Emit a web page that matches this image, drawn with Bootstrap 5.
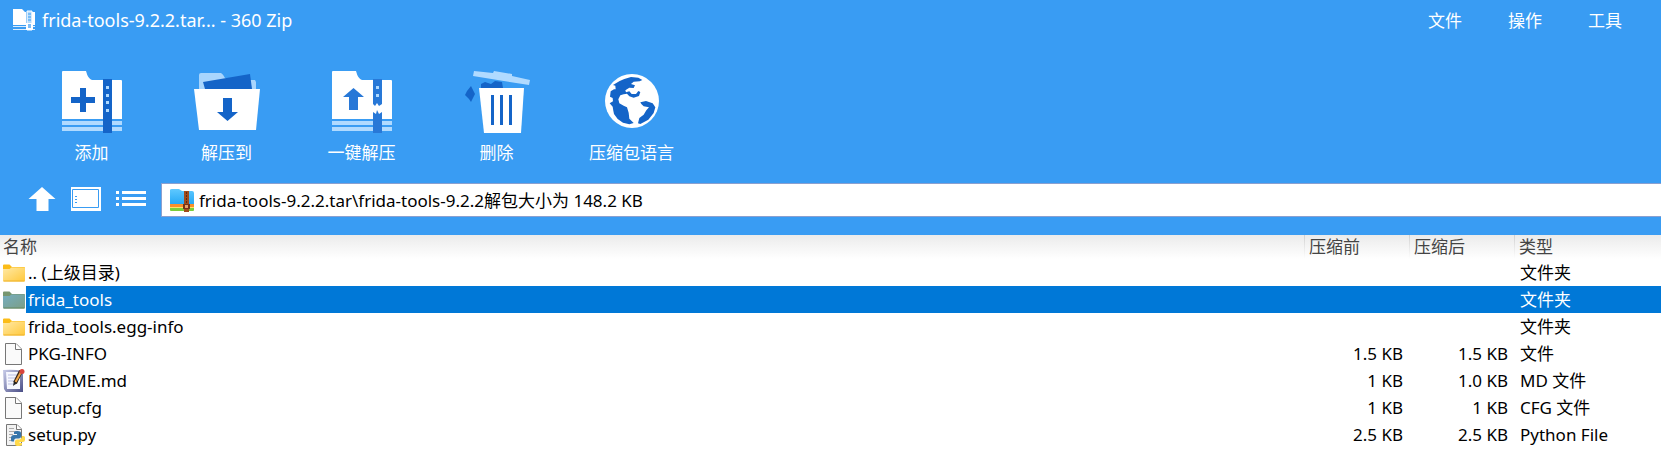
<!DOCTYPE html>
<html lang="zh-CN">
<head>
<meta charset="utf-8">
<meta name="viewport" content="width=device-width, initial-scale=1">
<title>frida-tools-9.2.2.tar... - 360 Zip</title>
<link href="https://cdn.jsdelivr.net/npm/bootstrap@5.3.0/dist/css/bootstrap.min.css" rel="stylesheet">
<style>
body{font-family:"Noto Sans","Noto Sans CJK SC",sans-serif;font-size:17px;line-height:27px;color:#000;background:#fff;overflow-x:hidden}
svg{display:block;flex:none}
button{font:inherit;color:inherit;background:none;border:0;padding:0}
.app-head{background:#399cf3;color:#fff;padding-bottom:18px}
.title-row{height:42px;padding:0 0 2px 12px}
.app-title{font-size:18px;padding-left:6px}
.menu-link{color:#fff;text-decoration:none;width:80px}
.menu-bar{margin-right:-7px}
.tool-row{padding:28px 0 0 24px}
.tool-btn{width:135px}
.tool-label{margin-top:5px;line-height:28px}
.path-row{margin-top:16px;padding-left:28px}
.path-row button{padding-bottom:2px}
.view-btns{gap:15px;margin-right:15px}
.path-box{height:34px;border:1px solid #8aa0d0;border-right:0;background:#fff;padding-left:7px}
.path-box input{border:0;outline:0;padding:0 0 2px;height:32px;color:#000;background:none;margin-left:4px}
.file-table{table-layout:fixed;line-height:27px}
.file-table td,.file-table th{padding:0;font-weight:400;white-space:nowrap;height:27px}
.file-table thead{background:linear-gradient(#ebebeb,#fff)}
.file-table thead th{height:24px;line-height:24px;color:#444;padding-left:5px}
.file-table thead th:first-child{padding-left:3px}
.file-table thead th+th{background:linear-gradient(#d0d0d0,#fff) left top/1px 100% no-repeat}
.size-col{width:105px}
.type-col{width:147px}
.file-table td.size-cell{text-align:right;padding-right:6px}
.file-table td.type-cell{padding-left:6px}
.icon-cell{width:26px;height:27px;padding-left:3px;background:#fff}
.file-name{padding-left:2px}
.picked{background:#0078d7;color:#fff}
</style>
</head>
<body>
<svg width="0" height="0" class="position-absolute" aria-hidden="true">
<defs>
<linearGradient id="gold" x1="0" y1="0" x2="1" y2="1"><stop offset="0" stop-color="#ffe9a6"/><stop offset="1" stop-color="#ffc83a"/></linearGradient>
<linearGradient id="dim" x1="0" y1="0" x2="1" y2="1"><stop offset="0" stop-color="#74adc0"/><stop offset="1" stop-color="#7c9f86"/></linearGradient>
<linearGradient id="sky" x1="0" y1="0" x2="0" y2="1"><stop offset="0" stop-color="#5fc9ff"/><stop offset="1" stop-color="#1fa4f4"/></linearGradient>
<linearGradient id="pad" x1="0" y1="0" x2="1" y2="1"><stop offset="0" stop-color="#c9cdea"/><stop offset="1" stop-color="#4a4e86"/></linearGradient>
<symbol id="folder" viewBox="0 0 22 18"><path d="M0 1.5Q0 .5 1 .5H6.500L9 3H21Q22 3 22 4V7H0z" fill="#fbbc18"/><path d="M0 5H6.500L8.500 3.500H21Q22 3.500 22 4.500V16.500Q22 17.500 21 17.500H1Q0 17.500 0 16.500z" fill="url(#gold)"/><path d="M.5 17H21.500" stroke="#eeb22a"/></symbol>
<symbol id="folder-dim" viewBox="0 0 22 18"><path d="M0 1.500Q0 .5 1 .5H6.500L9 3H21Q22 3 22 4V7H0z" fill="#76966f"/><path d="M0 5H6.500L8.500 3.500H21Q22 3.500 22 4.500V16.500Q22 17.500 21 17.500H1Q0 17.500 0 16.500z" fill="url(#dim)"/><path d="M.5 17H21.500" stroke="#66875d"/></symbol>
<symbol id="sheet" viewBox="0 0 22 22"><path d="M2.500 .5H13L18.500 6V21.500H2.500z" fill="#fafafa" stroke="#777"/><path d="M12.500 .5V6.500H18.500" fill="#fff" stroke="#777"/></symbol>
</defs>
</svg>

<header class="app-head">
  <div class="title-row d-flex align-items-center">
    <svg width="24" height="24" viewBox="0 0 24 24"><path d="M1 1H10L13 4H14V17H1z" fill="#fff"/><path d="M1 18.500H14M1 21.500H14M20 18.500H23M20 21.500H23" stroke="#d8edff"/><path d="M20 4H23V17H20z" fill="#fff"/><path d="M15 3H20V22H15z" fill="#b7dcfb" stroke="#fff"/><path d="M16 6H19M16 9H19M16 12H19" stroke="#399cf3"/><path d="M14 15H21V22H14z" fill="#fff"/><path d="M16 16H19V20H16z" fill="#7dbdf6"/></svg>
    <span class="app-title">frida-tools-9.2.2.tar... - 360 Zip</span>
    <nav class="menu-bar ms-auto d-flex" aria-label="菜单">
      <a class="menu-link" href="#">文件</a><a class="menu-link" href="#">操作</a><a class="menu-link" href="#">工具</a>
    </nav>
  </div>

  <div class="tool-row d-flex">
    <button type="button" class="tool-btn d-flex flex-column align-items-center">
      <svg width="68" height="64" viewBox="0 0 68 64"><path d="M4 2Q4 1 5 1H28Q30 9 34 10H63Q64 10 64 11V49H4z" fill="#fff"/><path d="M4 51H64V55H4zM4 57H64V61H4z" fill="#b0daff"/><path d="M45 9H54V63H45z" fill="#1464c8"/><path d="M48 16h3v3h-3zM48 24h3v3h-3zM48 31h3v3h-3zM48 39h3v3h-3z" fill="#b0daff"/><path d="M13 27H22V18H28V27H37V33H28V42H22V33H13z" fill="#1464c8"/></svg>
      <span class="tool-label">添加</span>
    </button>
    <button type="button" class="tool-btn d-flex flex-column align-items-center">
      <svg width="68" height="64" viewBox="0 0 68 64"><path d="M6 5Q6 3 8 3H28Q30 4 32 8L36 10H62L63 12V20H6z" fill="#a8d5fd"/><path d="M10 12L57 4L59 19H12z" fill="#1464c8"/><path d="M1 19H67L63 60H6z" fill="#fff"/><path d="M30 28H39V42H45L34.500 51L24 42H30z" fill="#1464c8"/></svg>
      <span class="tool-label">解压到</span>
    </button>
    <button type="button" class="tool-btn d-flex flex-column align-items-center">
      <svg width="68" height="64" viewBox="0 0 68 64"><path d="M4 2Q4 1 5 1H28Q30 9 34 10H63Q64 10 64 11V49H4z" fill="#fff"/><path d="M4 51H64V55H4zM4 57H64V61H4z" fill="#b0daff"/><path d="M45 9H54V34L51 36L49 33L47 36L45 34zM45 42L48 44L49 40L51 44L54 42V63H45z" fill="#2878d7"/><path d="M48 16h3v3h-3zM48 24h3v3h-3z" fill="#b0daff"/><path d="M15 27L25.500 18L36 27H30V40H21V27z" fill="#2878d7"/></svg>
      <span class="tool-label">一键解压</span>
    </button>
    <button type="button" class="tool-btn d-flex flex-column align-items-center">
      <svg width="68" height="64" viewBox="0 0 68 64"><path d="M11 1L30 3L31 1L49 4V6L67 10L66 15L10 6z" fill="#b0daff"/><path d="M18 18V14L22 12L28 14L32 11L39 12L40 18zM8 16L12 24L8 32L6 29L2 25L4 21z" fill="#1464c8"/><path d="M16 18H61L58 63H21z" fill="#fff"/><path d="M28 25h3v30h-3zM37 25h3v30h-3zM46 25h3v30h-3z" fill="#1464c8"/></svg>
      <span class="tool-label">删除</span>
    </button>
    <button type="button" class="tool-btn d-flex flex-column align-items-center">
      <svg width="68" height="64" viewBox="0 0 68 64"><circle cx="34" cy="31" r="27" fill="#fff"/><path transform="translate(-37 -10) scale(.33333)" d="M176 63L190 57L210 51L232 53L244 60L236 64L218 65L210 72L222 76L218 84L205 83L193 91L195 97L205 94L212 102L225 102L232 93L238 96L234 108L218 113L205 109L198 101L188 103L178 106L172 118L175 130L188 137L198 142L203 158L205 176L218 189L205 193L186 188L170 177L159 162L157 152L155 140L146 130L156 124L155 114L147 110L149 94L159 88L164 88L163 77L156 75zM238 127L255 123L275 130L283 142L278 159L262 179L238 192L231 190L235 174L248 164L256 151L264 142L248 139L241 132z" fill="#1464c8"/></svg>
      <span class="tool-label">压缩包语言</span>
    </button>
  </div>

  <div class="path-row d-flex align-items-center">
    <div class="view-btns d-flex">
      <button type="button" aria-label="向上"><svg width="28" height="24" viewBox="0 0 27 24"><path d="M13.500 0L27 12H20V24H8V12H0z" fill="#fff"/></svg></button>
      <button type="button" aria-label="预览"><svg width="30" height="24" viewBox="0 0 30 24"><path d="M0 0H30V24H0z" fill="#fff"/><path d="M1.500 2.500H27.500V20.500H1.500z" fill="#fff" stroke="#399cf3"/><path d="M4 9.500h2M4 12.500h2M4 15.500h2" stroke="#399cf3"/></svg></button>
      <button type="button" aria-label="列表"><svg width="30" height="24" viewBox="0 0 30 24"><path d="M0 5.500H3M6 5.500H30M0 11.500H3M6 11.500H30M0 17.500H3M6 17.500H30" stroke="#fff" stroke-width="3"/></svg></button>
    </div>
    <div class="path-box d-flex align-items-center flex-grow-1">
      <svg width="26" height="24" viewBox="0 0 26 24"><path d="M1 2Q1 1 3 1H10L13 3H23Q25 3 25 5V18H1z" fill="url(#sky)"/><path d="M1 16H25V19H1z" fill="#fb902a"/><path d="M1 19H25V22Q25 23 24 23H2Q1 23 1 22z" fill="#7ccd3c"/><path d="M1 19.500H25" stroke="#ffe16a"/><path d="M15 3H20V24H15z" fill="#a04b1c"/><path d="M17.500 4V15" stroke="#5b2b14" stroke-dasharray="2 1"/><path d="M14 16H21V21H14z" fill="#74341a"/><path d="M16 17H19V20H16z" fill="#e8a064"/></svg>
      <input class="flex-grow-1" type="text" aria-label="路径" value="frida-tools-9.2.2.tar\frida-tools-9.2.2解包大小为 148.2 KB">
    </div>
  </div>
</header>

<main>
<table class="file-table w-100">
  <colgroup><col><col class="size-col"><col class="size-col"><col class="type-col"></colgroup>
  <thead><tr><th scope="col">名称</th><th scope="col">压缩前</th><th scope="col">压缩后</th><th scope="col">类型</th></tr></thead>
  <tbody>
    <tr><td><div class="d-flex"><span class="icon-cell d-flex align-items-center"><svg width="22" height="18"><use href="#folder"/></svg></span><span class="file-name">.. (上级目录)</span></div></td><td></td><td></td><td class="type-cell">文件夹</td></tr>
    <tr class="picked"><td><div class="d-flex"><span class="icon-cell d-flex align-items-center"><svg width="22" height="18"><use href="#folder-dim"/></svg></span><span class="file-name">frida_tools</span></div></td><td></td><td></td><td class="type-cell">文件夹</td></tr>
    <tr><td><div class="d-flex"><span class="icon-cell d-flex align-items-center"><svg width="22" height="18"><use href="#folder"/></svg></span><span class="file-name">frida_tools.egg-info</span></div></td><td></td><td></td><td class="type-cell">文件夹</td></tr>
    <tr><td><div class="d-flex"><span class="icon-cell d-flex align-items-center"><svg width="22" height="22"><use href="#sheet"/></svg></span><span class="file-name">PKG-INFO</span></div></td><td class="size-cell">1.5 KB</td><td class="size-cell">1.5 KB</td><td class="type-cell">文件</td></tr>
    <tr><td><div class="d-flex"><span class="icon-cell d-flex align-items-center"><svg width="22" height="23" viewBox="0 0 22 23"><path d="M0 1Q10 0 20 2V23H3L1 20z" fill="url(#pad)"/><path d="M3 3H17V20H4z" fill="#f6f7ff"/><path d="M5 6H14M5 9H13M5 12H11M5 15H13" stroke="#b9bfe3"/><path d="M18 2L12 14" stroke="#3b2a1e" stroke-width="4"/><path d="M18 3L12.500 13" stroke="#f0a548" stroke-width="2"/><path d="M10 17L11 12L14 14z" fill="#222"/><circle cx="19" cy="2.500" r="2.500" fill="#d8433c"/></svg></span><span class="file-name">README.md</span></div></td><td class="size-cell">1 KB</td><td class="size-cell">1.0 KB</td><td class="type-cell">MD 文件</td></tr>
    <tr><td><div class="d-flex"><span class="icon-cell d-flex align-items-center"><svg width="22" height="22"><use href="#sheet"/></svg></span><span class="file-name">setup.cfg</span></div></td><td class="size-cell">1 KB</td><td class="size-cell">1 KB</td><td class="type-cell">CFG 文件</td></tr>
    <tr><td><div class="d-flex"><span class="icon-cell d-flex align-items-center"><svg width="22" height="22" viewBox="0 0 22 22"><path d="M3.500 .5H14L18.500 5V21.500H3.500z" fill="#f2f2f2" stroke="#777"/><path d="M13.500 .5V5.500H18.500" fill="#fff" stroke="#777"/><path d="M6 4.500H11M6 7.500H15M6 10.500H10M6 13.500H9M6 16.500H9" stroke="#aaa"/><path d="M8 16V14Q8 11 11 11H14V10H11V8Q12 7 14.500 7Q18 7 18 9V12Q18 14.500 15.500 14.500H13Q11 14.500 11 17.500H9Q8 17.500 8 16z" fill="#3675aa"/><path d="M22 13.500V16Q22 18 19.500 18H16.500V19H19V21Q18 22 15.500 22Q12 22 12 20V17.500Q12 15.500 14.500 15.500H17Q19 15 19 12H20.500Q22 12 22 13.500z" fill="#ffd94a"/></svg></span><span class="file-name">setup.py</span></div></td><td class="size-cell">2.5 KB</td><td class="size-cell">2.5 KB</td><td class="type-cell">Python File</td></tr>
  </tbody>
</table>
</main>
<script src="https://cdn.jsdelivr.net/npm/bootstrap@5.3.0/dist/js/bootstrap.bundle.min.js"></script>
</body>
</html>
